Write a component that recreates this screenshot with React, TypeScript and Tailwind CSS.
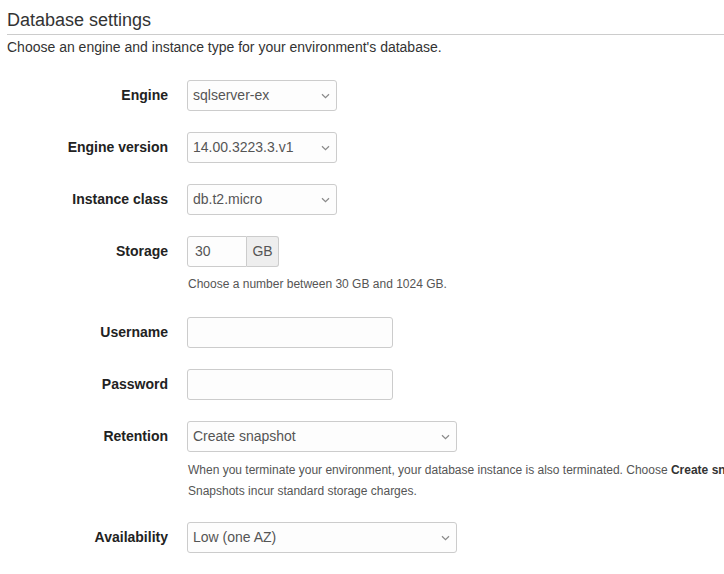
import React from 'react';

const Chevron = () => (
  <svg width="9" height="6" viewBox="0 0 9 6" className="shrink-0">
    <path d="M1 1.2 L4.5 4.6 L8 1.2" fill="none" stroke="#8a8a8a" strokeWidth="1.2" />
  </svg>
);

const Select = ({ value, width }: { value: string; width: string }) => (
  <div
    className={`${width} h-[31px] flex items-center justify-between pl-[5px] pr-[6px] border border-[#ccc] rounded-[3px] bg-[#fdfdfd] text-[14px] text-[#555]`}
  >
    <span>{value}</span>
    <Chevron />
  </div>
);

const TextInput = () => (
  <div className="w-[206px] h-[31px] border border-[#ccc] rounded-[3px] bg-[#fdfdfd]" />
);

const Row = ({
  label,
  children,
  help,
  className = '',
}: {
  label: string;
  children: React.ReactNode;
  help?: React.ReactNode;
  className?: string;
}) => (
  <div className={className}>
    <div className="flex items-center gap-[19px]">
      <label className="w-[168px] shrink-0 text-right text-[14px] font-bold text-[#222]">{label}</label>
      {children}
    </div>
    {help && (
      <div className="ml-[188px] text-[12px] text-[#555] whitespace-nowrap">{help}</div>
    )}
  </div>
);

export default function App() {
  return (
    <div
      className="w-[724px] h-[574px] overflow-hidden bg-white text-[#333]"
      style={{ fontFamily: '"Liberation Sans", Arial, sans-serif' }}
    >
      <div className="pl-[7px] pt-[10px]">
        <h2 className="text-[18px] leading-[20px] text-[#333] pb-[4px] border-b border-[#ccc]">
          Database settings
        </h2>
        <p className="mt-[2px] text-[14px] leading-[20px] text-[#333]">
          Choose an engine and instance type for your environment's database.
        </p>
      </div>

      <div className="mt-[23px]">
        <Row label="Engine" className="mb-[21px]">
          <Select value="sqlserver-ex" width="w-[150px]" />
        </Row>
        <Row label="Engine version" className="mb-[21px]">
          <Select value="14.00.3223.3.v1" width="w-[150px]" />
        </Row>
        <Row label="Instance class" className="mb-[21px]">
          <Select value="db.t2.micro" width="w-[150px]" />
        </Row>
        <Row
          label="Storage"
          className="mb-[23px]"
          help={<div className="mt-[7px] leading-[20px]">Choose a number between 30 GB and 1024 GB.</div>}
        >
          <div className="flex h-[31px]">
            <div className="w-[60px] h-full border border-[#ccc] rounded-l-[3px] bg-[#fdfdfd] pl-[7px] flex items-center text-[14px] text-[#555]">
              30
            </div>
            <div className="w-[32px] h-full border border-l-0 border-[#ccc] rounded-r-[3px] bg-[#eee] flex items-center justify-center text-[14px] text-[#555]">
              GB
            </div>
          </div>
        </Row>
        <Row label="Username" className="mb-[21px]">
          <TextInput />
        </Row>
        <Row label="Password" className="mb-[21px]">
          <TextInput />
        </Row>
        <Row
          label="Retention"
          className="mb-[20px]"
          help={
            <div className="mt-[8px] leading-[21px]">
              When you terminate your environment, your database instance is also terminated. Choose{' '}
              <b className="text-[#333]">Create snapshot</b> to save a snapshot of the database prior to termination.
              <br />
              Snapshots incur standard storage charges.
            </div>
          }
        >
          <Select value="Create snapshot" width="w-[270px]" />
        </Row>
        <Row label="Availability">
          <Select value="Low (one AZ)" width="w-[270px]" />
        </Row>
      </div>
    </div>
  );
}
